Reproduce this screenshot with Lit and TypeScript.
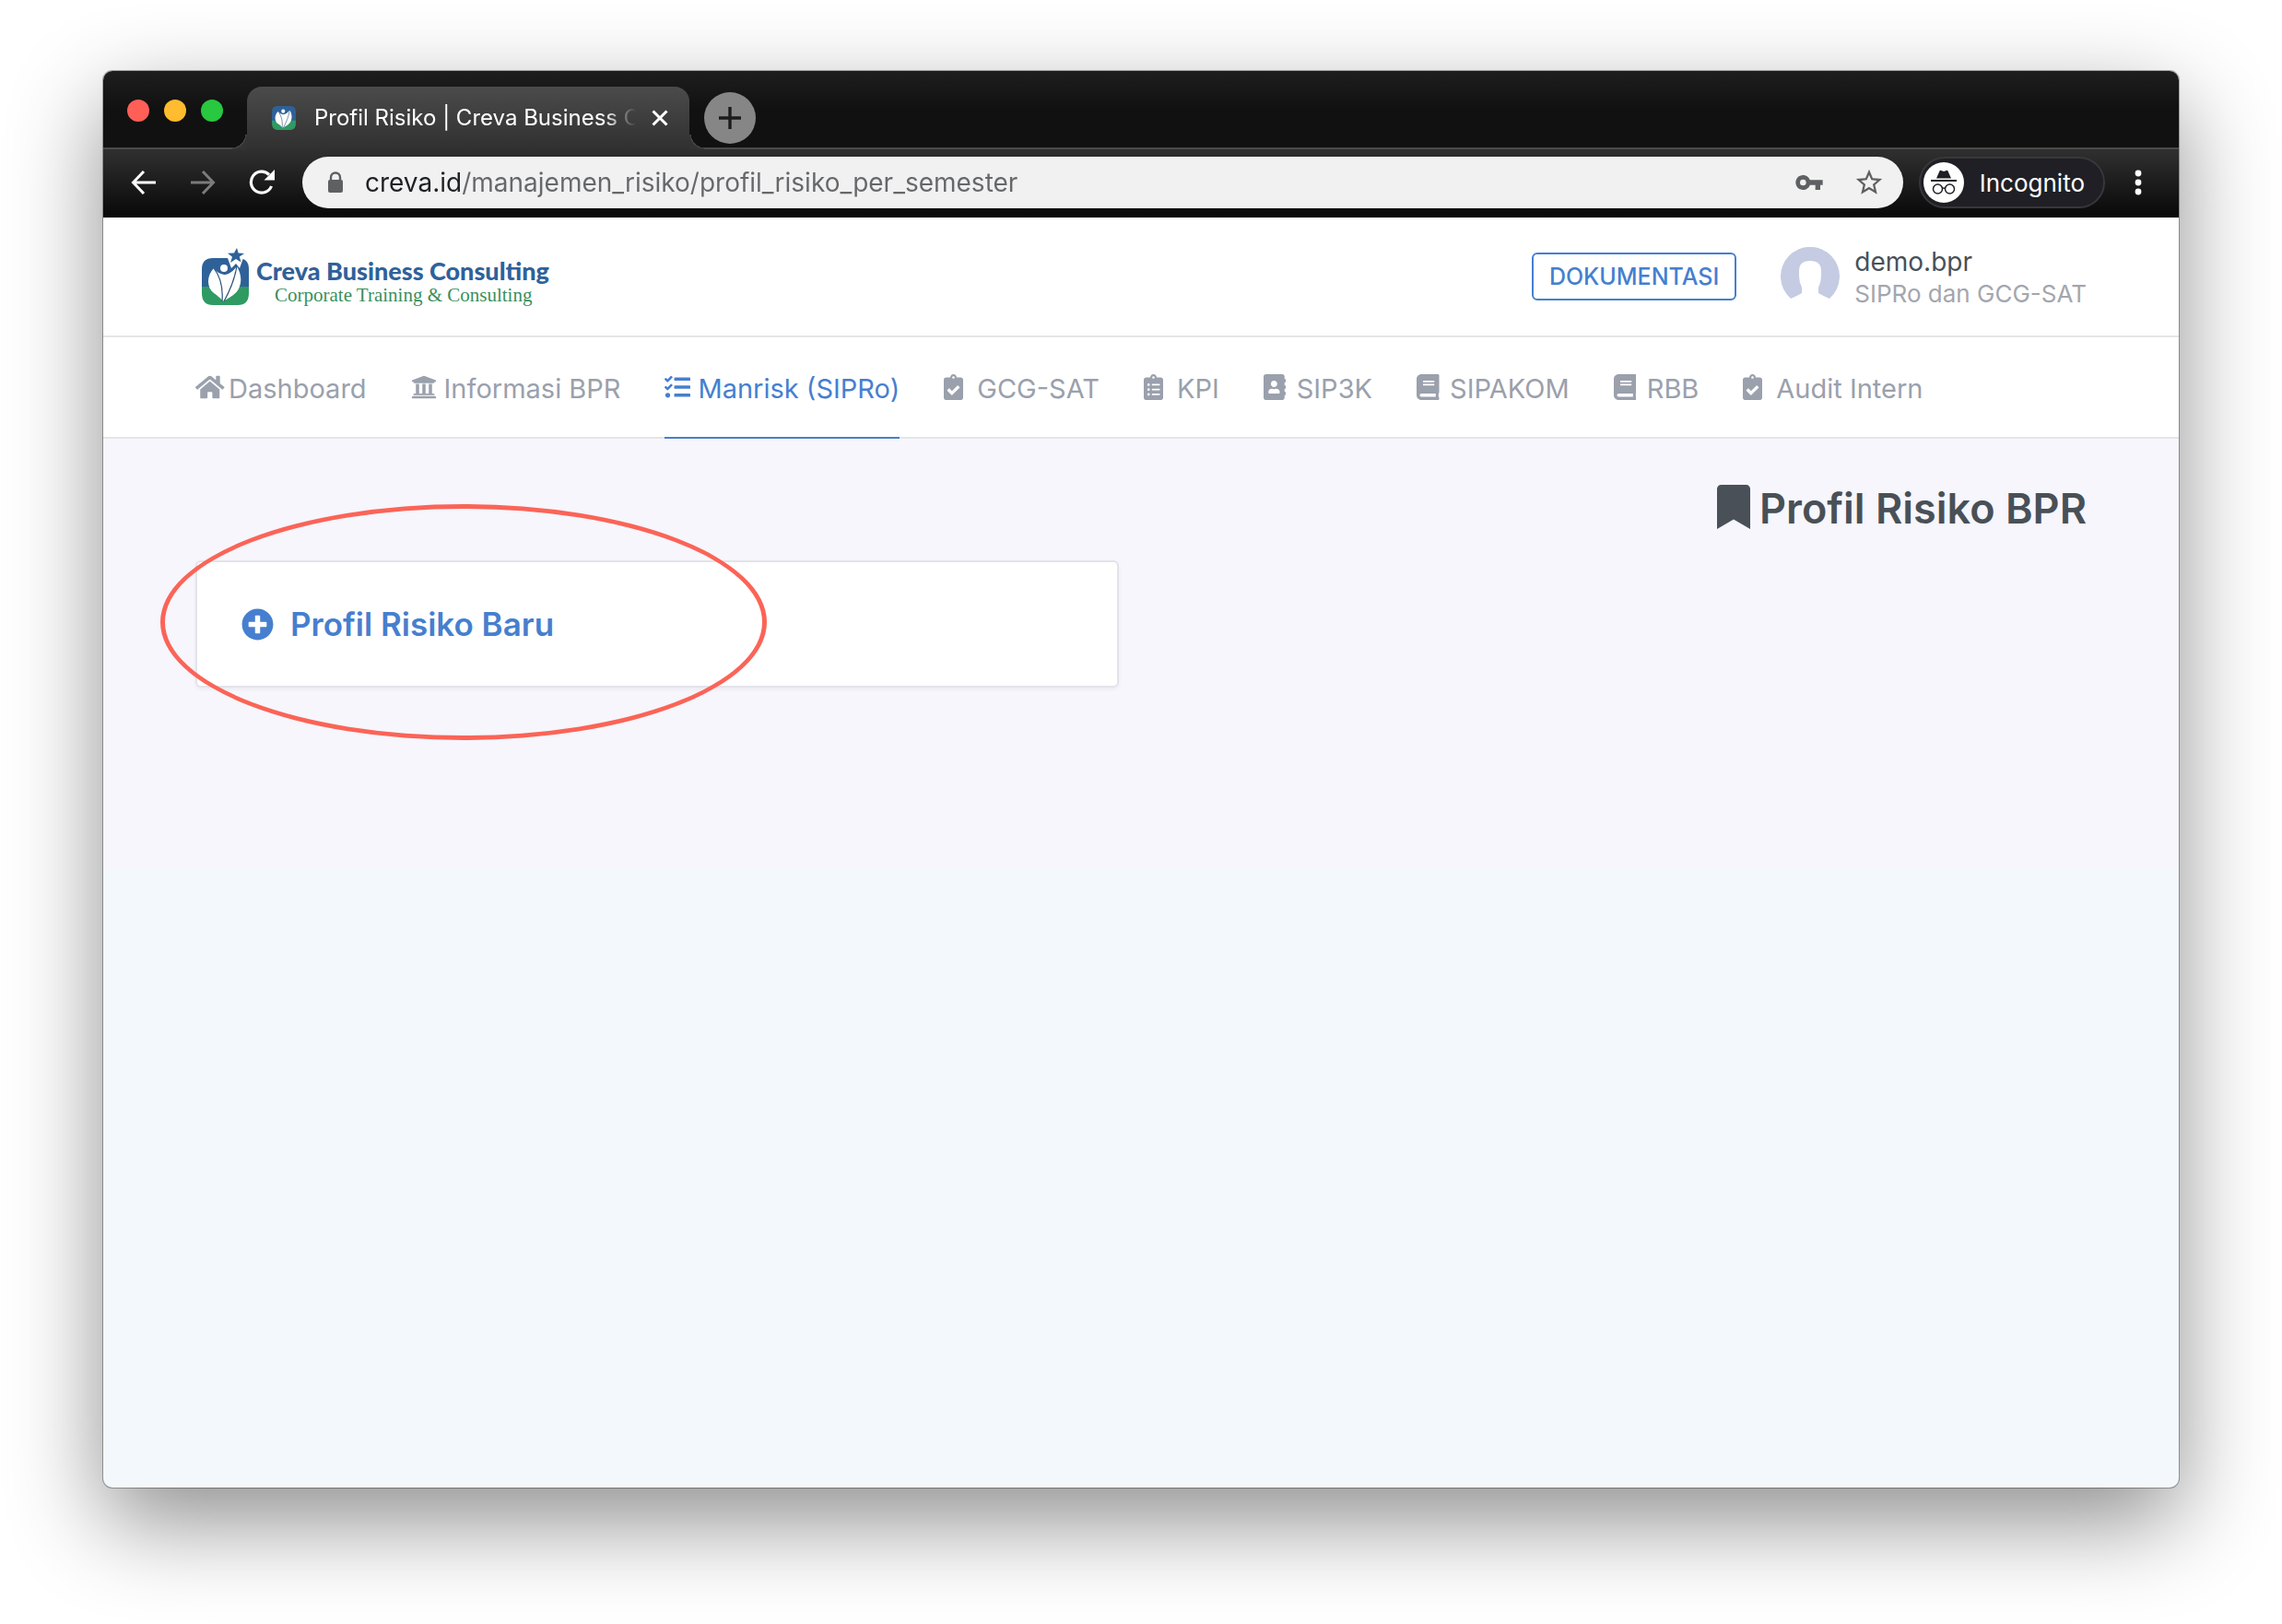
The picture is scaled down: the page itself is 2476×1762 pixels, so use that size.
import { LitElement, html, svg, css, nothing } from "lit";
import { customElement, state } from "lit/decorators.js";
import { classMap } from "lit/directives/class-map.js";

interface Glyph {
  w: number;
  d: string;
}

const BOARD =
  "M336 64h-80c0-35.3-28.7-64-64-64s-64 28.7-64 64H48C21.5 64 0 85.5 0 112v352c0 26.5 21.5 48 48 48h288c26.5 0 48-21.5 48-48V112c0-26.5-21.5-48-48-48z";

const GLYPHS: Record<string, Glyph> = {
  home: {
    w: 576,
    d: "M280.37 148.26L96 300.11V464a16 16 0 0 0 16 16l112.06-.29a16 16 0 0 0 15.92-16V368a16 16 0 0 1 16-16h64a16 16 0 0 1 16 16v95.64a16 16 0 0 0 16 16.05L464 480a16 16 0 0 0 16-16V300L295.67 148.26a12.19 12.19 0 0 0-15.3 0zM571.6 251.47L488 182.56V44.05a12 12 0 0 0-12-12h-56a12 12 0 0 0-12 12v72.61L318.47 43a48 48 0 0 0-61 0L4.34 251.47a12 12 0 0 0-1.6 16.9l25.5 31A12 12 0 0 0 45.15 301l235.22-193.74a12.19 12.19 0 0 1 15.3 0L530.9 301a12 12 0 0 0 16.9-1.6l25.5-31a12 12 0 0 0-1.7-16.93z",
  },
  university: {
    w: 512,
    d: "M496 128v16a8 8 0 0 1-8 8h-24v12c0 6.627-5.373 12-12 12H60c-6.627 0-12-5.373-12-12v-12H24a8 8 0 0 1-8-8v-16a8 8 0 0 1 4.941-7.392l232-88a7.996 7.996 0 0 1 6.118 0l232 88A8 8 0 0 1 496 128zm-24 304H40c-13.255 0-24 10.745-24 24v16a8 8 0 0 0 8 8h464a8 8 0 0 0 8-8v-16c0-13.255-10.745-24-24-24zM96 192v192H60c-6.627 0-12 5.373-12 12v20h416v-20c0-6.627-5.373-12-12-12h-36V192h-64v192h-64V192h-64v192h-64V192H96z",
  },
  tasks: {
    w: 512,
    d: "M139.61 35.5a12 12 0 0 0-17 0L58.93 98.81l-22.7-22.12a12 12 0 0 0-17 0L3.53 92.41a12 12 0 0 0 0 17l47.59 47.4a12.78 12.78 0 0 0 17.61 0l15.59-15.62L156.52 69a12.09 12.09 0 0 0 .09-17zm0 159.19a12 12 0 0 0-17 0l-63.68 63.72-22.7-22.1a12 12 0 0 0-17 0L3.53 252a12 12 0 0 0 0 17L51 316.5a12.77 12.77 0 0 0 17.6 0l15.7-15.69 72.2-72.22a12 12 0 0 0 .09-16.9zM64 368c-26.49 0-48.59 21.5-48.59 48S37.53 464 64 464a48 48 0 0 0 0-96zm432 16H208a16 16 0 0 0-16 16v32a16 16 0 0 0 16 16h288a16 16 0 0 0 16-16v-32a16 16 0 0 0-16-16zm0-320H208a16 16 0 0 0-16 16v32a16 16 0 0 0 16 16h288a16 16 0 0 0 16-16V80a16 16 0 0 0-16-16zm0 160H208a16 16 0 0 0-16 16v32a16 16 0 0 0 16 16h288a16 16 0 0 0 16-16v-32a16 16 0 0 0-16-16z",
  },
  clipboardCheck: {
    w: 384,
    d:
      BOARD +
      "M192 40c13.3 0 24 10.7 24 24s-10.7 24-24 24-24-10.7-24-24 10.7-24 24-24zm121.2 231.8l-143 141.8c-4.7 4.7-12.3 4.6-17-.1l-82.6-83.3c-4.7-4.7-4.6-12.3.1-17L99.1 285c4.7-4.7 12.3-4.6 17 .1l46 46.4 106-105.2c4.7-4.7 12.3-4.6 17 .1l28.2 28.4c4.7 4.8 4.6 12.3-.1 17z",
  },
  clipboardList: {
    w: 384,
    d:
      BOARD +
      "M96 424c-13.3 0-24-10.7-24-24s10.7-24 24-24 24 10.7 24 24-10.7 24-24 24zm0-96c-13.3 0-24-10.7-24-24s10.7-24 24-24 24 10.7 24 24-10.7 24-24 24zm0-96c-13.3 0-24-10.7-24-24s10.7-24 24-24 24 10.7 24 24-10.7 24-24 24zm96-192c13.3 0 24 10.7 24 24s-10.7 24-24 24-24-10.7-24-24 10.7-24 24-24zm128 368c0 4.4-3.6 8-8 8H168c-4.4 0-8-3.6-8-8v-16c0-4.4 3.6-8 8-8h144c4.4 0 8 3.6 8 8v16zm0-96c0 4.4-3.6 8-8 8H168c-4.4 0-8-3.6-8-8v-16c0-4.4 3.6-8 8-8h144c4.4 0 8 3.6 8 8v16zm0-96c0 4.4-3.6 8-8 8H168c-4.4 0-8-3.6-8-8v-16c0-4.4 3.6-8 8-8h144c4.4 0 8 3.6 8 8v16z",
  },
  addressBook: {
    w: 448,
    d: "M436 160c6.6 0 12-5.4 12-12v-40c0-6.6-5.4-12-12-12h-20V48c0-26.5-21.5-48-48-48H48C21.5 0 0 21.5 0 48v416c0 26.5 21.5 48 48 48h320c26.5 0 48-21.5 48-48v-48h20c6.6 0 12-5.4 12-12v-40c0-6.6-5.4-12-12-12h-20v-64h20c6.6 0 12-5.4 12-12v-40c0-6.6-5.4-12-12-12h-20v-64h20zm-228-32c35.3 0 64 28.7 64 64s-28.7 64-64 64-64-28.7-64-64 28.7-64 64-64zm112 236.8c0 10.6-10 19.2-22.4 19.2H118.4C106 384 96 375.4 96 364.8v-19.2c0-31.8 30.1-57.6 67.2-57.6h5c12.3 5.1 25.7 8 39.8 8s27.6-2.9 39.8-8h5c37.1 0 67.2 25.8 67.2 57.6v19.2z",
  },
  book: {
    w: 448,
    d: "M448 360V24c0-13.3-10.7-24-24-24H96C43 0 0 43 0 96v320c0 53 43 96 96 96h328c13.3 0 24-10.7 24-24v-16c0-7.5-3.5-14.3-8.9-18.7-4.2-15.4-4.2-59.3 0-74.7 5.4-4.3 8.9-11.1 8.9-18.6zM128 134c0-3.3 2.7-6 6-6h212c3.3 0 6 2.7 6 6v20c0 3.3-2.7 6-6 6H134c-3.3 0-6-2.7-6-6v-20zm0 64c0-3.3 2.7-6 6-6h212c3.3 0 6 2.7 6 6v20c0 3.3-2.7 6-6 6H134c-3.3 0-6-2.7-6-6v-20zm253.4 250H96c-17.7 0-32-14.3-32-32 0-17.6 14.4-32 32-32h285.4c-1.9 17.1-1.9 46.9 0 64z",
  },
  plusCircle: {
    w: 512,
    d: "M256 8C119 8 8 119 8 256s111 248 248 248 248-111 248-248S393 8 256 8zm144 276c0 6.6-5.4 12-12 12h-92v92c0 6.6-5.4 12-12 12h-56c-6.6 0-12-5.4-12-12v-92h-92c-6.6 0-12-5.4-12-12v-56c0-6.6 5.4-12 12-12h92v-92c0-6.6 5.4-12 12-12h56c6.6 0 12 5.4 12 12v92h92c6.6 0 12 5.4 12 12v56z",
  },
  bookmark: {
    w: 384,
    d: "M0 512V48C0 21.49 21.49 0 48 0h288c26.51 0 48 21.49 48 48v464L192 400 0 512z",
  },
};

const glyph = (name: string) => {
  const g = GLYPHS[name];
  return html`<svg class="glyph" viewBox="0 0 ${g.w} 512" aria-hidden="true">
    <path fill="currentColor" fill-rule="evenodd" d=${g.d}></path>
  </svg>`;
};

const emblem = (star: boolean) => svg`
  <path fill="#2f6199" d="M0 28V18Q0 6 12 6H39Q51 6 51 18V40H0z"></path>
  <path fill="#2f9a62" d="M0 37H51V44Q51 57 39 57H12Q0 57 0 44z"></path>
  <path fill="#fff" d="M13 17C5 25 5 38 13 44C17 47 20 49 23 53C28 50 36 46 39 41C44 33 43 23 38 15C33 21 29 24 24 24C19 23 16 21 13 17z"></path>
  <circle cx="24" cy="17" r="4" fill="#fff"></circle>
  <path fill="none" stroke="#2b4f77" stroke-width="1.2" d="M13 17C21 27 23 40 22 53M38 14C36 29 30 42 24 53"></path>
  ${
    star
      ? svg`<path fill="#fff" d="M28 6H45L41 17L37 12L32 17z"></path>
          <path fill="#2f6199" d="M38 -5L39.600 0.500L46 1L40.800 4.500L42.500 10.500L37 7L31 11L33 4.800L28 0.800L35 0.600z"></path>`
      : nothing
  }`;

const NAV = [
  { label: "Dashboard", icon: "home" },
  { label: "Informasi BPR", icon: "university" },
  { label: "Manrisk (SIPRo)", icon: "tasks" },
  { label: "GCG-SAT", icon: "clipboardCheck" },
  { label: "KPI", icon: "clipboardList" },
  { label: "SIP3K", icon: "addressBook" },
  { label: "SIPAKOM", icon: "book" },
  { label: "RBB", icon: "book" },
  { label: "Audit Intern", icon: "clipboardCheck" },
];

@customElement("browser-chrome")
class BrowserChrome extends LitElement {
  static styles = css`
    :host {
      display: block;
      color: #fff;
    }
    svg {
      display: block;
      flex: none;
    }
    button {
      display: grid;
      place-items: center;
      padding: 0;
      border: 0;
      background: none;
      color: inherit;
      font: inherit;
    }
    .strip {
      display: flex;
      align-items: flex-end;
      height: 83px;
      background: linear-gradient(#1e1e1e, #111 50%);
    }
    .lights {
      display: flex;
      gap: 16px;
      align-self: flex-start;
      padding: 31px 10px 0 26px;
    }
    .light {
      width: 24px;
      height: 24px;
      border-radius: 50%;
    }
    .close {
      background: #ff5f57;
    }
    .minimise {
      background: #febc2e;
    }
    .zoom {
      background: #28c840;
    }
    .tab {
      position: relative;
      z-index: 1;
      display: flex;
      align-items: center;
      box-sizing: border-box;
      width: 480px;
      height: 68px;
      margin: 0 16px -2px;
      padding: 0 16px 0 27px;
      border-radius: 16px 16px 0 0;
      background: linear-gradient(#4b4b4b, #303030);
    }
    .tab::before,
    .tab::after {
      content: "";
      position: absolute;
      bottom: 0;
      width: 16px;
      height: 16px;
    }
    .tab::before {
      right: 100%;
      background: radial-gradient(circle at 0 0, transparent 14px, #4a4a4a 14px, #333 16px);
    }
    .tab::after {
      left: 100%;
      background: radial-gradient(circle at 100% 0, transparent 14px, #4a4a4a 14px, #333 16px);
    }
    .title {
      flex: 1;
      margin-left: 20px;
      overflow: hidden;
      white-space: nowrap;
      font-size: 24px;
      line-height: 32px;
      -webkit-mask-image: linear-gradient(90deg, #000 90%, transparent 100%);
      mask-image: linear-gradient(90deg, #000 90%, transparent 100%);
    }
    .tab button {
      width: 32px;
      height: 32px;
      margin-left: 10px;
    }
    .add {
      width: 56px;
      height: 56px;
      margin-bottom: 4px;
      border-radius: 50%;
      color: #1c1c1c;
    }
    .strip .add {
      background: #868686;
    }
    .bar {
      display: flex;
      align-items: center;
      box-sizing: border-box;
      height: 76px;
      padding: 0 28px 2px 24px;
      border-top: 2px solid #4a4a4a;
      background: linear-gradient(#303030, #080808);
    }
    .tools {
      display: flex;
      gap: 24px;
      margin-right: 24px;
    }
    .tools button {
      width: 40px;
      height: 40px;
    }
    .forward {
      color: #7c7c7c;
    }
    .omnibox {
      display: flex;
      flex: 1;
      align-items: center;
      box-sizing: border-box;
      height: 56px;
      padding: 0 20px 0 24px;
      border-radius: 28px;
      background: #f1f1f1;
      color: #5f6062;
    }
    .address {
      flex: 1;
      min-width: 0;
      height: 40px;
      margin-left: 20px;
      padding: 0;
      border: 0;
      outline: 0;
      font-family: inherit;
      font-size: 28px;
      color: transparent;
      background: linear-gradient(90deg, #1f2023 105px, #66676a 105px);
      -webkit-background-clip: text;
      background-clip: text;
    }
    .extras {
      display: flex;
      gap: 32px;
    }
    .incognito {
      display: flex;
      align-items: center;
      gap: 17px;
      box-sizing: border-box;
      height: 56px;
      margin: 0 20px 0 17px;
      padding: 0 20px 0 3px;
      border: 2px solid #38383b;
      border-radius: 28px;
      background: #1f1f25;
      font-size: 26px;
    }
    .more {
      width: 32px;
      height: 40px;
    }
  `;

  render() {
    return html`
      <div class="strip">
        <div class="lights">
          <button class="light close" aria-label="Close window"></button>
          <button class="light minimise" aria-label="Minimise window"></button>
          <button class="light zoom" aria-label="Zoom window"></button>
        </div>
        <div class="tab">
          <svg width="26" height="30" viewBox="0 2 51 59" aria-hidden="true">${emblem(false)}</svg>
          <span class="title">Profil Risiko | Creva Business Consulting</span>
          <button aria-label="Close tab">
            <svg width="18" height="18" viewBox="0 0 18 18"><path d="M1.500 1.500l15 15m0-15l-15 15" stroke="currentColor" stroke-width="3"></path></svg>
          </button>
        </div>
        <button class="add" aria-label="New tab">
          <svg width="24" height="24" viewBox="0 0 24 24"><path d="M12 0v24M0 12h24" stroke="currentColor" stroke-width="3.400"></path></svg>
        </button>
      </div>
      <div class="bar">
        <div class="tools">
          <button aria-label="Back">
            <svg width="28" height="28" viewBox="0 0 28 28"><path d="M27 14H3M14 2L2.500 14L14 26" fill="none" stroke="currentColor" stroke-width="3"></path></svg>
          </button>
          <button class="forward" aria-label="Forward">
            <svg width="28" height="28" viewBox="0 0 28 28"><path d="M1 14h24M14 2l11.500 12L14 26" fill="none" stroke="currentColor" stroke-width="3"></path></svg>
          </button>
          <button aria-label="Reload">
            <svg width="28" height="28" viewBox="0 0 28 28"><path d="M24.500 18A11.500 11.500 0 1 1 22 5.500" fill="none" stroke="currentColor" stroke-width="3.200"></path><path d="M28 0v11.500H16.500z" fill="currentColor"></path></svg>
          </button>
        </div>
        <div class="omnibox">
          <svg width="24" height="26" viewBox="0 0 24 26" aria-hidden="true"><path d="M7 11V7.500a5 5 0 0 1 10 0V11" fill="none" stroke="currentColor" stroke-width="2.400"></path><rect x="4" y="10" width="16" height="14" rx="2" fill="currentColor"></rect></svg>
          <input class="address" type="text" aria-label="Address" value="creva.id/manajemen_risiko/profil_risiko_per_semester" />
          <div class="extras">
            <button aria-label="Passwords">
              <svg width="32" height="32" viewBox="0 0 24 24"><path fill="currentColor" d="M12.650 10C11.830 7.670 9.610 6 7 6c-3.310 0-6 2.690-6 6s2.690 6 6 6c2.610 0 4.830-1.670 5.650-4H17v4h4v-4h2v-4H12.650zM7 14.500a2.500 2.500 0 1 1 0-5 2.500 2.500 0 0 1 0 5z"></path></svg>
            </button>
            <button aria-label="Bookmark this page">
              <svg width="34" height="34" viewBox="0 0 24 24"><path fill="currentColor" d="M22 9.240l-7.190-.620L12 2 9.190 8.630 2 9.240l5.460 4.730L5.820 21 12 17.270 18.180 21l-1.630-7.030L22 9.240zM12 15.400l-3.760 2.270 1-4.280-3.320-2.880 4.380-.380L12 6.100l1.710 4.040 4.380.380-3.320 2.880 1 4.280L12 15.400z"></path></svg>
            </button>
          </div>
        </div>
        <button class="incognito">
          <svg width="44" height="44" viewBox="0 0 44 44" aria-hidden="true">
            <circle cx="22" cy="22" r="22" fill="#fff"></circle>
            <path fill="#1f1f25" d="M8 19h28v2H8zM14 17.500L17.500 9.500Q18 8.500 19 9L22 10L25 9Q26 8.500 26.500 9.500L30 17.500z"></path>
            <g fill="none" stroke="#1f1f25" stroke-width="1.500"><circle cx="15.500" cy="29" r="5"></circle><circle cx="28.500" cy="29" r="5"></circle><path d="M20.500 28.500q1.500-1.200 3 0"></path></g>
          </svg>
          <span>Incognito</span>
        </button>
        <button class="more" aria-label="More">
          <svg width="8" height="28" viewBox="0 0 8 28"><g fill="currentColor"><circle cx="4" cy="4" r="3.400"></circle><circle cx="4" cy="14" r="3.400"></circle><circle cx="4" cy="24" r="3.400"></circle></g></svg>
        </button>
      </div>
    `;
  }
}

@customElement("app-root")
class AppRoot extends LitElement {
  static styles = css`
    :host {
      display: flex;
      box-sizing: border-box;
      min-height: 100vh;
      padding: 77px 112px 148px;
      background: #fff;
      font-family: Inter, "Liberation Sans", sans-serif;
    }
    .window {
      display: flex;
      flex: 1;
      flex-direction: column;
      min-width: 0;
      overflow: hidden;
      border-radius: 10px;
      background: #f3f8fd;
      box-shadow: 0 0 0 1px rgba(0, 0, 0, 0.3), 0 36px 100px rgba(0, 0, 0, 0.45);
    }
    a {
      color: inherit;
      text-decoration: none;
    }
    .glyph {
      display: block;
      flex: none;
      height: 1em;
    }
    .header,
    .nav {
      display: flex;
      align-items: center;
      box-sizing: border-box;
      padding: 0 100px;
      border-bottom: 2px solid #e4e5e7;
      background: #fff;
    }
    .header {
      height: 130px;
    }
    .brand {
      display: flex;
      gap: 8px;
      margin: 0 auto 0 7px;
    }
    .brand-icon {
      display: block;
    }
    .brand-text {
      display: flex;
      flex-direction: column;
      padding-top: 9px;
    }
    .brand-name {
      font-family: Lato, "Open Sans", sans-serif;
      font-size: 27px;
      font-weight: 900;
      line-height: 32px;
      color: #2f6199;
    }
    .brand-line {
      padding-left: 20px;
      font-family: "Liberation Serif", serif;
      font-size: 21px;
      line-height: 20px;
      color: #3a8f5c;
    }
    .docs {
      box-sizing: border-box;
      height: 52px;
      padding: 0 17px;
      border: 2px solid #467fcf;
      border-radius: 6px;
      font-size: 25px;
      font-weight: 500;
      line-height: 48px;
      color: #467fcf;
    }
    .user {
      display: flex;
      align-items: center;
      gap: 16px;
      margin-left: 48px;
    }
    .user-text {
      display: flex;
      flex-direction: column;
      padding-top: 2px;
    }
    .user-name {
      font-size: 28px;
      line-height: 36px;
      color: #495057;
    }
    .user-role {
      font-size: 26px;
      line-height: 34px;
      color: #a3a6ad;
    }
    .nav {
      gap: 48px;
      height: 110px;
      align-items: stretch;
    }
    .link {
      display: flex;
      align-items: center;
      margin-bottom: -2px;
      padding-top: 2px;
      border-bottom: 2px solid transparent;
      font-size: 29px;
      white-space: nowrap;
      color: #9aa0ac;
    }
    .link.active {
      border-color: #467fcf;
      color: #467fcf;
    }
    .link-icon {
      width: 36px;
      padding-bottom: 2px;
      font-size: 28px;
    }
    .content {
      box-sizing: border-box;
      min-height: 468px;
      padding: 48px 100px;
      background: #f6f6fc;
    }
    .heading {
      display: flex;
      align-items: center;
      justify-content: flex-end;
      gap: 10px;
      margin: 0;
      font-size: 45px;
      font-weight: 600;
      line-height: 56px;
      color: #495057;
    }
    .heading .glyph {
      height: 48px;
      padding-bottom: 4px;
    }
    .card {
      position: relative;
      box-sizing: border-box;
      width: calc(50% - 24px);
      margin-top: 28px;
      padding: 47px 48px;
      border: 2px solid #e3e4ea;
      border-radius: 6px;
      background: #fff;
      box-shadow: 0 2px 4px rgba(0, 0, 0, 0.05);
    }
    .create {
      display: flex;
      align-items: center;
      gap: 18px;
      font-size: 35px;
      font-weight: 600;
      line-height: 40px;
      color: #467fcf;
    }
    .marker {
      position: absolute;
      left: -40px;
      top: -63px;
      box-sizing: border-box;
      width: 658px;
      height: 256px;
      border: 5px solid #fb6457;
      border-radius: 50%;
      pointer-events: none;
    }
  `;

  @state() private active = "Manrisk (SIPRo)";

  private select(event: Event, label: string) {
    event.preventDefault();
    this.active = label;
  }

  render() {
    return html`
      <div class="window">
        <browser-chrome></browser-chrome>
        <header class="header">
          <a class="brand" href="#">
            <svg class="brand-icon" width="51" height="63" viewBox="0 -5 51 63" aria-hidden="true">${emblem(true)}</svg>
            <span class="brand-text">
              <span class="brand-name">Creva Business Consulting</span>
              <span class="brand-line">Corporate Training &amp; Consulting</span>
            </span>
          </a>
          <a class="docs" href="#">DOKUMENTASI</a>
          <a class="user" href="#">
            <svg width="64" height="64" viewBox="0 0 64 64" aria-hidden="true">
              <path fill="#c5cbe2" d="M11 56A32 32 0 1 1 53 56Q46 53 41 50V44Q44 38 44 31V26Q44 15 32 15T20 26V31Q20 38 23 44V50Q18 53 11 56z"></path>
            </svg>
            <span class="user-text">
              <span class="user-name">demo.bpr</span>
              <span class="user-role">SIPRo dan GCG-SAT</span>
            </span>
          </a>
        </header>
        <nav class="nav">
          ${NAV.map(
            (item) => html`<a
              class=${classMap({ link: true, active: item.label === this.active })}
              href="#"
              @click=${(event: Event) => this.select(event, item.label)}
              ><span class="link-icon">${glyph(item.icon)}</span><span>${item.label}</span></a
            >`
          )}
        </nav>
        <main class="content">
          <h1 class="heading">${glyph("bookmark")}<span>Profil Risiko BPR</span></h1>
          <section class="card">
            <a class="create" href="#">${glyph("plusCircle")}<span>Profil Risiko Baru</span></a>
            <div class="marker"></div>
          </section>
        </main>
      </div>
    `;
  }
}
